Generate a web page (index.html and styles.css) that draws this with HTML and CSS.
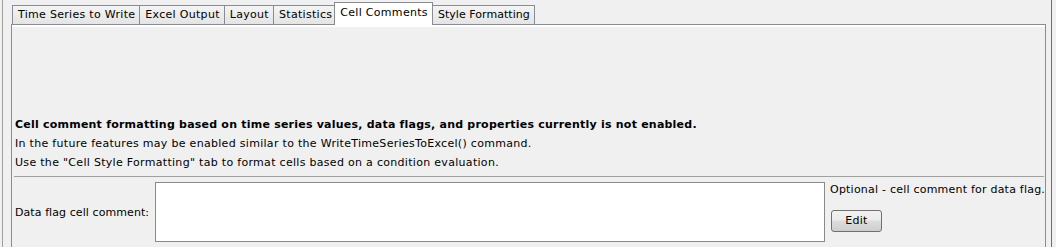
FILE: index.html
```html
<!DOCTYPE html>
<html>
<head>
<meta charset="utf-8">
<link rel="stylesheet" href="styles.css">
</head>
<body>
<div class="frame">
  <div class="inner">
    <div class="tabs">
      <div class="tab">Time Series to Write</div>
      <div class="tab">Excel Output</div>
      <div class="tab">Layout</div>
      <div class="tab">Statistics</div>
      <div class="tab selected">Cell Comments</div>
      <div class="tab tight">Style Formatting</div>
    </div>
    <div class="panel">
      <div class="spacer"></div>
      <div class="line bold">Cell comment formatting based on time series values, data flags, and properties currently is not enabled.</div>
      <div class="line">In the future features may be enabled similar to the WriteTimeSeriesToExcel() command.</div>
      <div class="line">Use the "Cell Style Formatting" tab to format cells based on a condition evaluation.</div>
      <div class="sep"></div>
      <div class="row">
        <div class="label">Data flag cell comment:</div>
        <div class="field"></div>
        <div class="side">
          <div class="note">Optional - cell comment for data flag.</div>
          <div class="btn">Edit</div>
        </div>
      </div>
    </div>
  </div>
</div>
</body>
</html>
```
FILE: styles.css
```css
html, body {
  margin: 0;
  padding: 0;
  background: #f0f0f0;
}
body {
  width: 1056px;
  height: 247px;
  overflow: hidden;
  font-family: "DejaVu Sans", Verdana, sans-serif;
  font-size: 11px;
  letter-spacing: 0.3px;
  color: #000;
}
.frame {
  margin-left: 2px;
  width: 1048px;
  height: 247px;
  border-left: 1px solid #a0a0a0;
  border-right: 1px solid #6d6d6d;
  box-sizing: content-box;
}
.inner {
  padding-left: 8px;
  padding-top: 2px;
  width: 1035px;
}
.tabs {
  display: flex;
  align-items: flex-end;
  height: 22px;
  padding-left: 1px;
  position: relative;
  z-index: 2;
}
.tab {
  height: 18px;
  line-height: 18px;
  padding: 0 4px 0 5px;
  border: 1px solid #898c95;
  border-bottom: none;
  background: linear-gradient(#f4f4f4, #e4e4e4);
  margin-right: -1px;
  white-space: nowrap;
}
.tab.tight { letter-spacing: 0.05px; }
.tab.selected {
  line-height: 19px;
  background: #fff;
  padding: 0 4px 0 5px;
  margin: 0 -1px -1px -2px;
  position: relative;
  z-index: 3;
  height: 23px;
  box-sizing: border-box;
  border-bottom: none;
}
.panel {
  border: 1px solid #898c95;
  border-bottom: none;
  height: 230px;
  padding: 0 1px 0 2px;
  box-shadow: inset 0 2px 0 #ffffff;
}
.spacer { height: 90px; }
.line {
  height: 19px;
  line-height: 19px;
  padding-left: 1px;
  white-space: nowrap;
}
.bold {
  font-weight: bold;
  letter-spacing: 0.22px;
}
.sep {
  margin-top: 4px;
  height: 1px;
  background: #a0a0a0;
}
.row {
  display: grid;
  grid-template-columns: 136px 670px 1fr;
  column-gap: 5px;
  margin-top: 5px;
}
.label {
  padding-left: 1px;
  display: flex;
  align-items: center;
  height: 60px;
  white-space: nowrap;
  letter-spacing: 0.08px;
}
.field {
  height: 60px;
  box-sizing: border-box;
  border: 1px solid #8a8a8a;
  background: #fff;
}
.note {
  line-height: 15px;
  white-space: nowrap;
  letter-spacing: 0.22px;
}
.btn {
  margin-top: 13px;
  margin-left: 1px;
  width: 51px;
  height: 22px;
  box-sizing: border-box;
  border: 1px solid #707070;
  border-radius: 3px;
  background: linear-gradient(#f2f2f2 0%, #ebebeb 45%, #dddddd 50%, #cfcfcf 100%);
  text-align: center;
  line-height: 20px;
}
```
